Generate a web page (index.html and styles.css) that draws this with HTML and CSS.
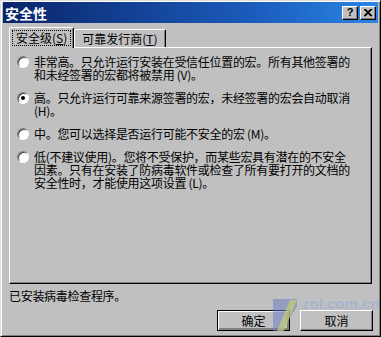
FILE: index.html
```html
<!DOCTYPE html>
<html lang="zh-CN">

<head>
    <meta charset="UTF-8">
    <meta name="viewport" content="width=device-width, initial-scale=1.0">
    <title>安全性</title>
    <link rel="stylesheet" href="styles.css">
</head>

<body>
    <div class="window">
        <div class="titlebar">
            <span class="title">安全性</span>
            <div class="title-buttons">
                <span class="tb-btn">?</span>
                <span class="tb-btn close">
                    <svg width="9" height="8" viewBox="0 0 9 8">
                        <path d="M1 0 L8 7 M0 0 L7 7 M8 0 L1 7 M7 0 L0 7" stroke="#000" stroke-width="1.2" />
                    </svg>
                </span>
            </div>
        </div>

        <div class="tabs">
            <div class="tab active"><span class="focus">安全级(<u>S</u>)</span></div>
            <div class="tab">可靠发行商(<u>T</u>)</div>
        </div>

        <div class="panel">
            <div class="option">
                <span class="radio"></span>
                <p>非常高。只允许运行安装在受信任位置的宏。所有其他签署的<br>和未经签署的宏都将被禁用 (V)。</p>
            </div>
            <div class="option">
                <span class="radio checked"></span>
                <p>高。只允许运行可靠来源签署的宏，未经签署的宏会自动取消<br>(H)。</p>
            </div>
            <div class="option">
                <span class="radio"></span>
                <p>中。您可以选择是否运行可能不安全的宏 (M)。</p>
            </div>
            <div class="option">
                <span class="radio"></span>
                <p>低(不建议使用)。您将不受保护，而某些宏具有潜在的不安全<br>因素。只有在安装了防病毒软件或检查了所有要打开的文档的<br>安全性时，才能使用这项设置 (L)。</p>
            </div>
        </div>

        <p class="status">已安装病毒检查程序。</p>

        <div class="buttons">
            <button class="default">确定</button>
            <button>取消</button>
        </div>

        <!-- 水印 -->
        <div class="watermark">
            <svg width="28" height="36" viewBox="0 0 28 36">
                <polygon points="2,2 26,2 26,9 11,34 2,34" fill="#6677c4" opacity="0.5" />
                <polygon points="19,3 26,3 13,34 6,34" fill="#cad66a" opacity="0.65" />
            </svg>
            <span class="wm-text">zol.com.cn</span>
        </div>
    </div>
</body>

</html>
```
FILE: styles.css
```css
body {
    margin: 0;
    font-family: "Noto Sans CJK SC", "Liberation Sans", sans-serif;
    font-size: 12px;
    color: #000;
}

.window {
    position: relative;
    width: 381px;
    height: 337px;
    box-sizing: border-box;
    background: #c0c0c0;
    border: 1px solid;
    border-color: #dfdfdf #000 #000 #dfdfdf;
    box-shadow: inset 1px 1px #fff, inset -1px -1px #808080;
    padding: 1px 2px 2px 2px;
    display: flex;
    flex-direction: column;
    overflow: hidden;
}

.titlebar {
    height: 21px;
    display: flex;
    align-items: center;
    justify-content: space-between;
    background: linear-gradient(to right, #0a246a, #1c5fc0 70%, #2a86e4);
    padding: 0 2px 0 2px;
}

.title {
    color: #fff;
    font-weight: bold;
    font-size: 14px;
    line-height: 16px;
}

.title-buttons {
    display: flex;
    gap: 2px;
}

.tb-btn {
    width: 16px;
    height: 14px;
    box-sizing: border-box;
    background: #c0c0c0;
    border: 1px solid;
    border-color: #fff #000 #000 #fff;
    box-shadow: inset -1px -1px #808080;
    display: flex;
    align-items: center;
    justify-content: center;
    font-family: "Liberation Sans", sans-serif;
    font-weight: bold;
    font-size: 11px;
    line-height: 11px;
}

.tabs {
    display: flex;
    align-items: flex-end;
    margin-top: 4px;
    padding-left: 6px;
    position: relative;
    z-index: 1;
}

.tab {
    height: 17px;
    padding: 0 7px;
    display: flex;
    align-items: center;
    border: 1px solid;
    border-bottom: none;
    border-color: #fff #000 #000 #fff;
    box-shadow: inset -1px 0 #808080;
    border-radius: 2px 2px 0 0;
    background: #c0c0c0;
}

.tab.active {
    height: 20px;
    padding: 0 3px;
    margin-bottom: -1px;
}

.focus {
    outline: 1px dotted #000;
    padding: 0 3px;
    line-height: 14px;
}

.panel {
    height: 237px;
    box-sizing: border-box;
    margin: 0 6px;
    border: 1px solid;
    border-color: #fff #000 #000 #fff;
    box-shadow: inset -1px -1px #808080;
    padding: 7px 8px 0 7px;
    display: flex;
    flex-direction: column;
    gap: 10px;
}

.option {
    display: flex;
    gap: 5px;
    align-items: flex-start;
}

.option p {
    margin: 0;
    line-height: 13px;
    letter-spacing: -0.3px;
    white-space: nowrap;
}

.radio {
    flex: none;
    width: 12px;
    height: 12px;
    box-sizing: border-box;
    border-radius: 50%;
    background: #fff;
    border: 1px solid;
    border-color: #808080 #fff #fff #808080;
    box-shadow: inset 1px 1px #404040;
    position: relative;
    margin-top: 1px;
}

.radio.checked::after {
    content: "";
    position: absolute;
    left: 3px;
    top: 3px;
    width: 4px;
    height: 4px;
    border-radius: 50%;
    background: #000;
}

.status {
    margin: 5px 0 0 6px;
    line-height: 14px;
    letter-spacing: -0.3px;
}

.buttons {
    display: flex;
    justify-content: flex-end;
    gap: 10px;
    margin: 7px 5px 0 0;
}

button {
    width: 73px;
    height: 21px;
    box-sizing: border-box;
    padding: 0;
    font-family: inherit;
    font-size: 12px;
    background: #c0c0c0;
    border: 1px solid;
    border-color: #fff #000 #000 #fff;
    box-shadow: inset -1px -1px #808080;
}

button.default {
    border: 1px solid #000;
    box-shadow: inset 1px 1px #fff, inset -2px -2px #808080;
}

.watermark {
    position: absolute;
    left: 270px;
    top: 296px;
    display: flex;
    align-items: flex-start;
    gap: 3px;
    pointer-events: none;
}

.wm-text {
    font-family: "Liberation Sans", sans-serif;
    font-weight: bold;
    font-size: 15px;
    line-height: 14px;
    color: #9fb0d2;
    opacity: 0.75;
}
```
